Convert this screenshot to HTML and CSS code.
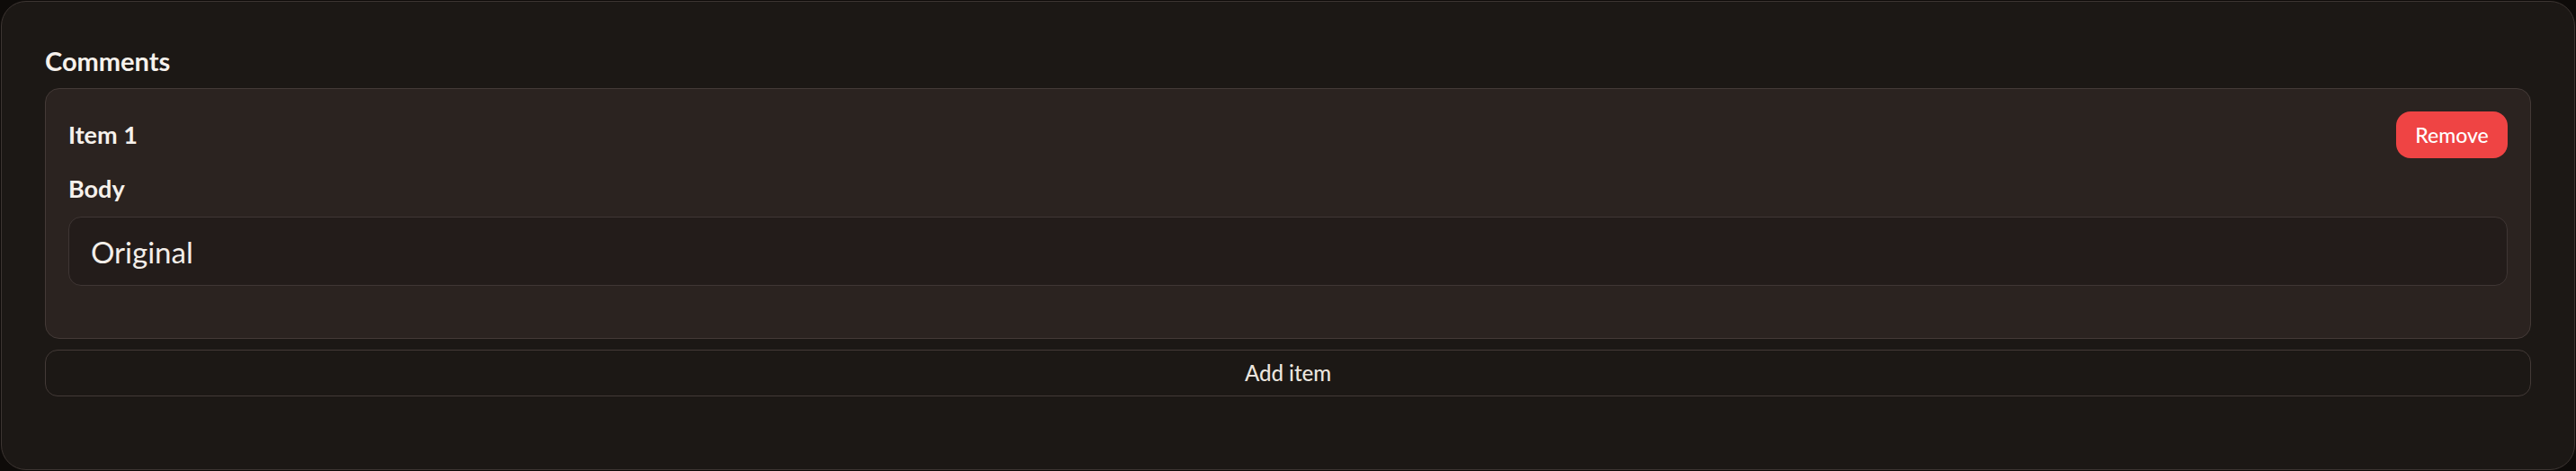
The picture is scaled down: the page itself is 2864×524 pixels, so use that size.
FILE: index.html
```html
<!DOCTYPE html>
<html lang="en">
<head>
<meta charset="utf-8">
<title>Comments</title>
<link rel="stylesheet" href="styles.css">
</head>
<body>
  <section class="panel">
    <h2 class="panel-title">Comments</h2>
    <div class="item-card">
      <div class="item-header">
        <span class="item-title">Item 1</span>
        <button class="btn-remove" type="button">Remove</button>
      </div>
      <label class="field-label">Body</label>
      <div class="field-input">Original</div>
    </div>
    <button class="btn-add" type="button">Add item</button>
  </section>
</body>
</html>
```
FILE: styles.css
```css
html, body {
  margin: 0;
  background: #0e0b09;
}
body {
  padding: 1px;
  font-family: Lato, "Noto Sans", sans-serif;
  color: #f6f1ec;
}
.panel {
  background: #1c1815;
  border: 1px solid #3d3532;
  border-radius: 28px;
  padding: 48px 48px 81px 48px;
  display: flex;
  flex-direction: column;
}
.panel-title {
  margin: 0 0 12px 0;
  font-size: 29px;
  line-height: 36px;
  font-weight: 700;
  color: #f6f1ec;
}
.item-card {
  background: #2b2320;
  border: 1px solid #443a37;
  border-radius: 16px;
  padding: 25px 25px 58px 25px;
  display: flex;
  flex-direction: column;
}
.item-header {
  display: flex;
  align-items: center;
  justify-content: space-between;
  height: 52px;
}
.item-title {
  font-size: 27px;
  font-weight: 700;
  line-height: 36px;
}
.btn-remove {
  width: 124px;
  height: 52px;
  border: none;
  border-radius: 16px;
  background: #ef4444;
  color: #ffffff;
  font-family: inherit;
  font-size: 23px;
  font-weight: 500;
  cursor: pointer;
}
.field-label {
  margin: 18px 0 15px 0;
  font-size: 27px;
  line-height: 32px;
  font-weight: 700;
}
.field-input {
  height: 75px;
  display: flex;
  align-items: center;
  padding: 0 24px;
  background: #231c1a;
  border: 1px solid #3f3634;
  border-radius: 14px;
  font-size: 33px;
  font-weight: 400;
  color: #f3eee9;
}
.btn-add {
  margin-top: 12px;
  height: 52px;
  padding: 0 0 2px 0;
  background: #1c1815;
  border: 1px solid #433a37;
  border-radius: 14px;
  color: #ebe5df;
  font-family: inherit;
  font-size: 24px;
  font-weight: 500;
  cursor: pointer;
}
```
